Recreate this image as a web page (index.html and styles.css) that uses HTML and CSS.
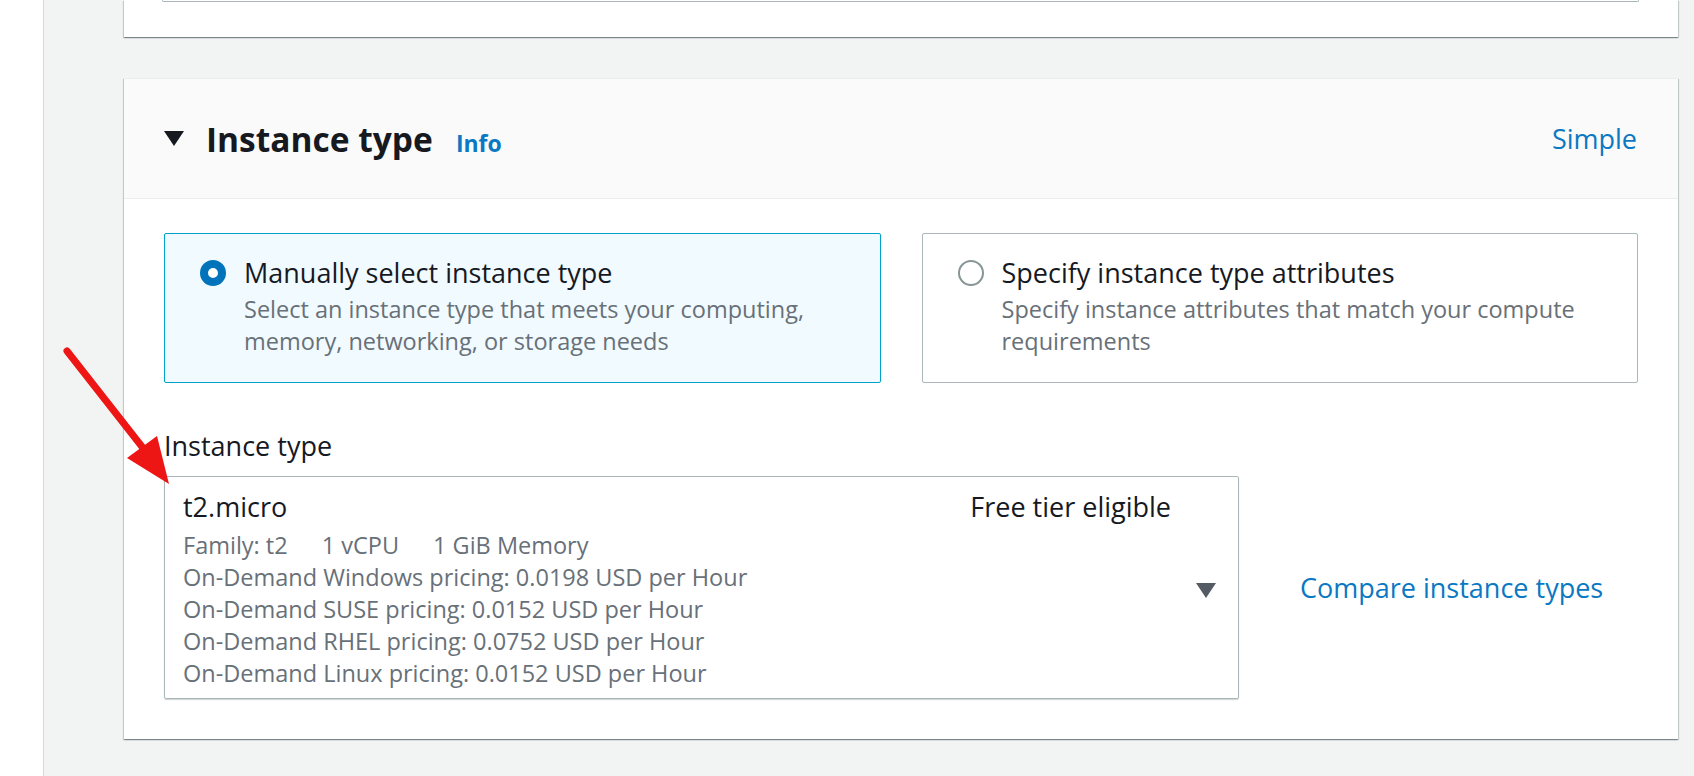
FILE: index.html
```html
<!DOCTYPE html>
<html lang="en">
<head>
<meta charset="utf-8">
<title>Instance type</title>
<link rel="stylesheet" href="styles.css">
</head>
<body>
<div class="page">
  <aside class="rail"></aside>
  <main class="main">
    <section class="card card-top"><div class="input-tail"></div></section>
    <section class="card card-it">
      <header class="card-head">
        <div class="head-left">
          <span class="caret-down"></span>
          <h2 class="title">Instance type</h2>
          <a class="info">Info</a>
        </div>
        <a class="link simple">Simple</a>
      </header>
      <div class="card-body">
        <div class="tiles">
          <div class="tile tile-on">
            <span class="radio radio-on"></span>
            <div class="tile-text">
              <div class="tile-title">Manually select instance type</div>
              <div class="tile-desc">Select an instance type that meets your computing,<br>memory, networking, or storage needs</div>
            </div>
          </div>
          <div class="tile">
            <span class="radio radio-off"></span>
            <div class="tile-text">
              <div class="tile-title">Specify instance type attributes</div>
              <div class="tile-desc">Specify instance attributes that match your compute<br>requirements</div>
            </div>
          </div>
        </div>
        <div class="field-label">Instance type</div>
        <div class="field-row">
          <div class="select">
            <div class="sel-main">
              <div class="sel-top"><span>t2.micro</span><span>Free tier eligible</span></div>
              <div class="sel-details">
                <div><span class="spec">Family: t2</span><span class="spec">1 vCPU</span><span class="spec">1 GiB Memory</span></div>
                <div>On-Demand Windows pricing: 0.0198 USD per Hour</div>
                <div>On-Demand SUSE pricing: 0.0152 USD per Hour</div>
                <div>On-Demand RHEL pricing: 0.0752 USD per Hour</div>
                <div>On-Demand Linux pricing: 0.0152 USD per Hour</div>
              </div>
            </div>
            <span class="sel-caret"></span>
          </div>
          <a class="link compare">Compare instance types</a>
        </div>
      </div>
    </section>
  </main>
</div>
<svg class="arrow" width="1694" height="776" viewBox="0 0 1694 776">
  <line x1="67" y1="351" x2="143" y2="448" stroke="#ee1515" stroke-width="7" stroke-linecap="round"/>
  <polygon points="169,484 127,458 157,436" fill="#ee1515"/>
</svg>
</body>
</html>
```
FILE: styles.css
```css
html, body {
  margin: 0;
  padding: 0;
}
body {
  background: #f2f3f3;
  font-family: "Open Sans", "Noto Sans", sans-serif;
  color: #16191f;
  width: 1694px;
  height: 776px;
  overflow: hidden;
  position: relative;
}
.page {
  display: flex;
  min-height: 776px;
}
.rail {
  flex: none;
  width: 43px;
  background: #ffffff;
  border-right: 1px solid #d5dbdb;
}
.main {
  flex: 1;
  padding: 0 16px 0 80px;
}
.card {
  background: #ffffff;
  box-shadow: 0 1px 1px 0 rgba(0, 28, 36, 0.3), 1px 1px 1px 0 rgba(0, 28, 36, 0.15), -1px 1px 1px 0 rgba(0, 28, 36, 0.15);
}
.card-top {
  height: 37px;
}
.input-tail {
  margin: 0 39px 0 38px;
  height: 1px;
  border: 1px solid #aab7b8;
  border-top: none;
  border-radius: 0 0 3px 3px;
}
.card-it {
  margin-top: 41px;
  border-top: 1px solid #eaeded;
}
.card-head {
  height: 119px;
  background: #fafafa;
  border-bottom: 1px solid #eaeded;
  display: flex;
  align-items: center;
  justify-content: space-between;
  padding: 0 41px 0 40px;
}
.head-left {
  display: flex;
  align-items: baseline;
}
.caret-down {
  align-self: center;
  width: 0;
  height: 0;
  border-left: 10px solid transparent;
  border-right: 10px solid transparent;
  border-top: 15px solid #16191f;
  margin-right: 22px;
}
.title {
  margin: 0;
  font-size: 33.5px;
  font-weight: 700;
  line-height: 42px;
  color: #16191f;
}
.info {
  font-size: 23px;
  font-weight: 700;
  color: #0a78c2;
  margin-left: 23px;
}
.link {
  color: #0a78c2;
  font-size: 27px;
  line-height: 32px;
}
.card-body {
  padding: 34px 40px 40px 40px;
}
.tiles {
  display: grid;
  grid-template-columns: 1fr 1fr;
  column-gap: 41px;
}
.tile {
  display: flex;
  align-items: flex-start;
  gap: 18px;
  padding: 23px 20px 25px 35px;
  border: 1px solid #aab7b8;
  border-radius: 2px;
}
.tile-on {
  border-color: #00a1c9;
  background: #f1faff;
}
.radio {
  flex: none;
  box-sizing: border-box;
  width: 26px;
  height: 26px;
  border-radius: 50%;
  margin-top: 3px;
  background: #ffffff;
}
.radio-on {
  border: 8px solid #0073bb;
}
.radio-off {
  border: 2px solid #879596;
}
.tile-title {
  font-size: 27px;
  line-height: 32px;
}
.tile-desc {
  margin-top: 4px;
  font-size: 23.5px;
  line-height: 32px;
  color: #687078;
}
.field-label {
  margin-top: 47px;
  font-size: 27px;
  line-height: 32px;
}
.field-row {
  margin-top: 14px;
  display: flex;
  align-items: center;
  gap: 61px;
}
.select {
  width: 1075px;
  box-sizing: border-box;
  border: 1px solid #aab7b8;
  border-radius: 2px;
  box-shadow: 0 1px 1px 0 rgba(0, 28, 36, 0.2);
  display: flex;
  align-items: center;
  padding: 14px 22px 9px 18px;
}
.sel-main {
  flex: 1;
}
.sel-top {
  display: flex;
  justify-content: space-between;
  font-size: 27px;
  line-height: 32px;
}
.sel-details {
  margin-top: 6px;
  font-size: 23.5px;
  line-height: 32px;
  color: #687078;
}
.spec {
  margin-right: 34px;
}
.sel-caret {
  flex: none;
  width: 0;
  height: 0;
  margin-left: 25px;
  border-left: 10px solid transparent;
  border-right: 10px solid transparent;
  border-top: 15px solid #545b64;
}
.arrow {
  position: absolute;
  left: 0;
  top: 0;
  pointer-events: none;
}
```
